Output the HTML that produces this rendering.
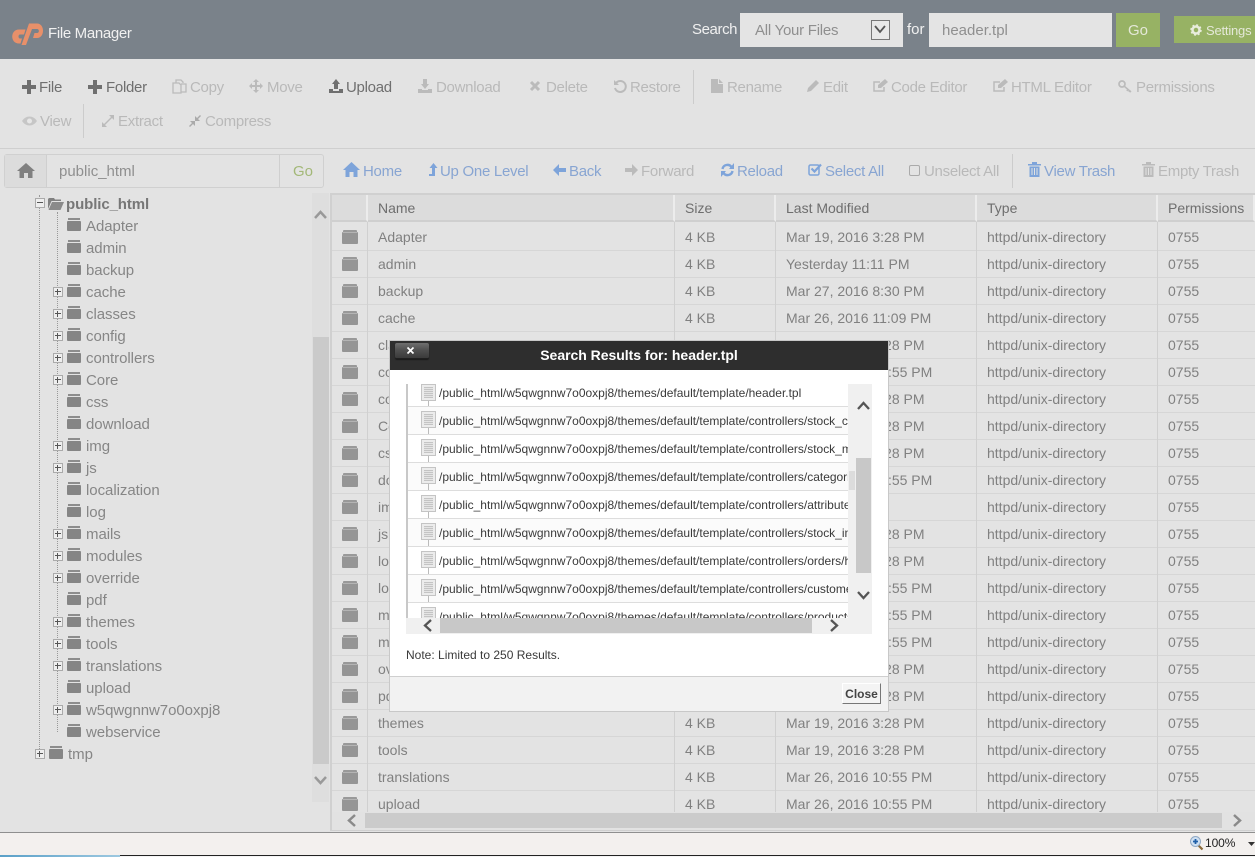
<!DOCTYPE html>
<html><head><meta charset="utf-8"><title>File Manager</title>
<style>
html,body{margin:0;padding:0}
body{width:1255px;height:857px;overflow:hidden;position:relative;background:#e3e3e3;font-family:"Liberation Sans",Arial,sans-serif;color:#777}
.a{position:absolute;white-space:nowrap}
.t{position:absolute;white-space:nowrap;font-size:15px;line-height:18px;letter-spacing:-.28px;margin-top:1px}
.d{color:#b9b9b9}.k{color:#6f6f6f}.b{color:#88a5d2}
svg{position:absolute;overflow:visible}
.tr{position:absolute;left:86px;font-size:15px;line-height:18px;color:#868686;white-space:nowrap;margin-top:1px;letter-spacing:-.05px}
.fi{position:absolute;left:67px;width:14px;height:10px;background:#858585;border-radius:1px}
.fi:before{content:"";position:absolute;left:1px;top:-3px;width:12px;height:2px;background:#8d8d8d}
.ex{position:absolute;left:53px;width:8px;height:8px;border:1px solid #aaa;background:#eee}
.ex:before{content:"";position:absolute;left:1px;top:3px;width:6px;height:1px;background:#555}
.ex:after{content:"";position:absolute;left:3px;top:1px;width:1px;height:6px;background:#555}
.row{position:absolute;left:332px;width:923px;height:26px;border-bottom:1px solid #d6d6d6;font-size:14px;line-height:26px;color:#808080;background:#e3e3e3}
.row span{position:absolute;top:0;white-space:nowrap}
.row .n{left:46px}.row .s{left:353px}.row .m{left:454px}.row .y{left:655px}.row .p{left:836px}
.row i{position:absolute;left:10px;top:8px;width:16px;height:12px;background:#959595;border-radius:1px}
.row i:before{content:"";position:absolute;left:1px;top:-2px;width:14px;height:2px;background:#999;box-shadow:0 1px 0 #b4b4b4;border-radius:1px 1px 0 0}
.th{position:absolute;top:195px;height:27px;line-height:26px;font-size:14px;color:#6e6e6e;background:#dcdcdc;border-right:2px solid #ececec;box-sizing:border-box;padding-left:10px;border-bottom:2px solid #cfcfcf}
.res{position:absolute;left:2px;width:442px;height:27px;border-bottom:1px solid #ddd;background:#fff;font-size:12px;line-height:17px;color:#3a3a3a;overflow:hidden;white-space:nowrap;letter-spacing:-.01px}
.res:nth-child(odd){background:#fbfbfb}
.res span{position:absolute;left:31px;top:0}
.fd{position:absolute;left:13px;top:-1px;width:13px;height:15px;background:#ececec;border:1px solid #c4c4c4}
.fd:before{content:"";position:absolute;left:2px;top:2px;width:9px;height:11px;background:repeating-linear-gradient(#c4c4c4 0 1px,#e4e4e4 1px 2px)}
.fd:after{content:"";position:absolute;left:6px;top:16px;width:1px;height:12px;background:#bbb}
.dv{position:absolute;border-left:1px dotted #999}
</style></head><body>

<div class="a" style="left:0;top:0;width:1255px;height:59px;background:#7a828a"></div>
<svg style="left:12px;top:23px" width="33" height="23" viewBox="0 0 33 23"><path d="M17 .5H25C33 .5 33 15 25 15H21L22.500 10H25C27.500 10 27.500 6 25 6H20L14 22H9.500z" fill="#e8906a"/><path d="M13.500 6.500L12 11.500H8C6 11.500 6 15.500 8 15.500H10L8.500 20.500H7C-2 20.500-2 6.500 7 6.500z" fill="#e8906a"/></svg>
<div class="a" style="left:48px;top:25px;font-size:15px;line-height:18px;color:#f0f0f0;letter-spacing:-.33px">File Manager</div>
<div class="a" style="left:692px;top:21px;font-size:15px;line-height:18px;color:#f0f0f0;letter-spacing:-.4px">Search</div>
<div class="a" style="left:740px;top:13px;width:163px;height:34px;background:#e4e4e4"></div>
<div class="a" style="left:755px;top:22px;font-size:15px;line-height:18px;color:#8f8f8f;letter-spacing:-.25px">All Your Files</div>
<div class="a" style="left:871px;top:20px;width:17px;height:18px;background:#e8e8e8;border:1px solid #777"></div>
<svg style="left:874px;top:25px" width="12" height="9"><path d="M1 1 L6 7 L11 1" fill="none" stroke="#555" stroke-width="1.800"/></svg>
<div class="a" style="left:907px;top:21px;font-size:15px;line-height:18px;color:#f0f0f0">for</div>
<div class="a" style="left:929px;top:13px;width:183px;height:34px;background:#e4e4e4"></div>
<div class="a" style="left:942px;top:22px;font-size:15px;line-height:18px;color:#8f8f8f">header.tpl</div>
<div class="a" style="left:1116px;top:14px;width:44px;height:33px;background:#97b264;color:#e4e8d8;font-size:15px;line-height:33px;text-align:center;box-shadow:0 -1px 0 #97b264">Go</div>
<div class="a" style="left:1174px;top:16px;width:81px;height:27px;background:#97b264;color:#e4e8d8;font-size:13px;line-height:30px;overflow:hidden;letter-spacing:-.2px"><span style="position:absolute;left:32px;top:0">Settings</span></div>
<svg style="left:1190px;top:24px" width="12" height="12" viewBox="0 0 12 12"><circle cx="6" cy="6" r="3.500" fill="none" stroke="#e8ecdc" stroke-width="2.500"/><circle cx="6" cy="6" r="5" fill="none" stroke="#e8ecdc" stroke-width="1.500" stroke-dasharray="2 1.930"/></svg>

<!-- toolbar icons -->
<svg style="left:22px;top:80px" width="14" height="14"><path d="M5 0h4v5h5v4H9v5H5V9H0V5h5z" fill="#6f6f6f"/></svg>
<div class="t k" style="left:39px;top:78px">File</div>
<svg style="left:88px;top:80px" width="14" height="14"><path d="M5 0h4v5h5v4H9v5H5V9H0V5h5z" fill="#6f6f6f"/></svg>
<div class="t k" style="left:106px;top:78px">Folder</div>
<svg style="left:172px;top:79px" width="16" height="15"><path d="M4 4V1h5l2 2v1M1 4h6l2 2v8H1zM9 5h5v8H9" fill="none" stroke="#bbb" stroke-width="1.300"/></svg>
<div class="t d" style="left:190px;top:78px">Copy</div>
<svg style="left:249px;top:79px" width="14" height="14"><path d="M7 0l3 3H8v3h3V4l3 3-3 3V8H8v3h2l-3 3-3-3h2V8H3v2L0 7l3-3v2h3V3H4z" fill="#bbb"/></svg>
<div class="t d" style="left:267px;top:78px">Move</div>
<svg style="left:329px;top:79px" width="14" height="14"><path d="M7 0l4 5H9v5H5V5H3zM0 10h4v2h6v-2h4v4H0z" fill="#6f6f6f"/></svg>
<div class="t k" style="left:346px;top:78px">Upload</div>
<svg style="left:418px;top:79px" width="14" height="14"><path d="M5 0h4v5h2l-4 5-4-5h2zM0 10h4v1h6v-1h4v4H0z" fill="#bbb"/></svg>
<div class="t d" style="left:436px;top:78px">Download</div>
<svg style="left:529px;top:80px" width="12" height="12"><path d="M2 2L10 10M10 2L2 10" stroke="#bbb" stroke-width="3"/></svg>
<div class="t d" style="left:546px;top:78px">Delete</div>
<svg style="left:613px;top:79px" width="14" height="14"><path d="M3 4A5.500 5.500 0 1 1 2 9" fill="none" stroke="#bbb" stroke-width="2"/><path d="M1 1V6H6z" fill="#bbb"/></svg>
<div class="t d" style="left:630px;top:78px">Restore</div>
<div class="a" style="left:693px;top:70px;width:1px;height:34px;background:#ccc"></div>
<svg style="left:711px;top:79px" width="12" height="14"><path d="M0 0H7V5H12V14H0zM8 0l4 4H8z" fill="#bbb"/></svg>
<div class="t d" style="left:727px;top:78px">Rename</div>
<svg style="left:807px;top:79px" width="13" height="14"><path d="M9 1l3 3-8 8-4 1 1-4z" fill="#bbb"/></svg>
<div class="t d" style="left:823px;top:78px">Edit</div>
<svg style="left:873px;top:79px" width="15" height="14"><path d="M11 8v4H1V3h6" fill="none" stroke="#bbb" stroke-width="1.500"/><path d="M12 0l3 3-7 6H5V6z" fill="#bbb"/></svg>
<div class="t d" style="left:891px;top:78px">Code Editor</div>
<svg style="left:993px;top:79px" width="15" height="14"><path d="M11 8v4H1V3h6" fill="none" stroke="#bbb" stroke-width="1.500"/><path d="M12 0l3 3-7 6H5V6z" fill="#bbb"/></svg>
<div class="t d" style="left:1011px;top:78px">HTML Editor</div>
<svg style="left:1118px;top:80px" width="14" height="13"><circle cx="4" cy="4" r="3" fill="none" stroke="#bbb" stroke-width="1.700"/><path d="M6 6l7 6M10 9l-1 2M12 10l-1 2" stroke="#bbb" stroke-width="1.500"/></svg>
<div class="t d" style="left:1136px;top:78px">Permissions</div>
<svg style="left:22px;top:116px" width="15" height="10"><path d="M0 5C4-1 11-1 15 5C11 11 4 11 0 5z" fill="#c6c6c6"/><circle cx="7.500" cy="5" r="2.500" fill="#e6e6e6"/></svg>
<div class="t d" style="left:40px;top:112px">View</div>
<div class="a" style="left:83px;top:104px;width:1px;height:34px;background:#ccc"></div>
<svg style="left:102px;top:115px" width="12" height="12"><path d="M7 0h5v5l-2-2-7 7 2 2H0V7l2 2 7-7z" fill="#bbb"/></svg>
<div class="t d" style="left:118px;top:112px">Extract</div>
<svg style="left:189px;top:115px" width="12" height="12"><path d="M11 0l1 1-3 3 2 2H6V1l2 2zM0 11l3-3-2-2h5v5l-2-2-3 3z" fill="#aaa"/></svg>
<div class="t d" style="left:205px;top:112px">Compress</div>
<div class="a" style="left:0;top:148px;width:1255px;height:1px;background:#cfcfcf"></div>

<!-- path bar -->
<div class="a" style="left:4px;top:154px;width:318px;height:32px;border:1px solid #d0d0d0;border-radius:3px"></div>
<div class="a" style="left:5px;top:155px;width:41px;height:32px;background:#dcdcdc;border-right:1px solid #cfcfcf"></div>
<svg style="left:17px;top:163px" width="18" height="15"><path d="M9 0L18 8H15.500V15H11V10H7V15H2.500V8H0z" fill="#808080"/></svg>
<div class="a" style="left:59px;top:163px;font-size:15px;line-height:18px;color:#8f8f8f">public_html</div>
<div class="a" style="left:279px;top:155px;width:1px;height:32px;background:#cfcfcf"></div>
<div class="a" style="left:293px;top:163px;font-size:15px;line-height:18px;color:#a3b878">Go</div>

<svg style="left:343px;top:162px" width="17" height="15"><path d="M8.500 0L17 8H14.500V15H10.500V10H6.500V15H2.500V8H0z" fill="#7ea4da"/></svg>
<div class="t b" style="left:363px;top:162px">Home</div>
<svg style="left:429px;top:163px" width="9" height="13"><path d="M4.500 0L8.500 5H6V13H0V11H3V5H.5z" fill="#7ea4da"/></svg>
<div class="t b" style="left:440px;top:162px">Up One Level</div>
<svg style="left:553px;top:164px" width="13" height="12"><path d="M6 0L0 6l6 6V8h7V4H6z" fill="#7ea4da"/></svg>
<div class="t b" style="left:569px;top:162px">Back</div>
<svg style="left:625px;top:164px" width="13" height="12"><path d="M7 0l6 6-6 6V8H0V4h7z" fill="#bbb"/></svg>
<div class="t d" style="left:641px;top:162px">Forward</div>
<svg style="left:721px;top:163px" width="13" height="14"><path d="M1.500 6A5 5 0 0 1 10.500 4M11.500 8A5 5 0 0 1 2.500 10" fill="none" stroke="#7ea4da" stroke-width="2.400"/><path d="M13 0V6H8zM0 14V8H5z" fill="#7ea4da"/></svg>
<div class="t b" style="left:737px;top:162px">Reload</div>
<svg style="left:808px;top:163px" width="14" height="13"><rect x="1" y="2" width="10" height="10" rx="1.500" fill="none" stroke="#7ea4da" stroke-width="1.500"/><path d="M3.500 5.500L6.500 8.500L13 1.500" fill="none" stroke="#7ea4da" stroke-width="2.200"/></svg>
<div class="t b" style="left:825px;top:162px">Select All</div>
<div class="a" style="left:909px;top:165px;width:9px;height:9px;border:1px solid #aaa;border-radius:2px"></div>
<div class="t d" style="left:924px;top:162px">Unselect All</div>
<div class="a" style="left:1012px;top:154px;width:1px;height:34px;background:#ccc"></div>
<svg style="left:1028px;top:161px" width="13" height="16"><path d="M0 3H13V4.500H0zM4 1H9V3H4zM1.500 5.500H11.500V16H1.500z" fill="#7ea4da"/><path d="M4 7V14M6.500 7V14M9 7V14" stroke="#e3e3e3" stroke-width="1"/></svg>
<div class="t b" style="left:1044px;top:162px">View Trash</div>
<svg style="left:1142px;top:161px" width="13" height="16"><path d="M0 3H13V4.500H0zM4 1H9V3H4zM1.500 5.500H11.500V16H1.500z" fill="#bbb"/><path d="M4 7V14M6.500 7V14M9 7V14" stroke="#e3e3e3" stroke-width="1"/></svg>
<div class="t d" style="left:1158px;top:162px">Empty Trash</div>

<!-- tree -->
<div class="dv" style="left:39px;top:195px;height:558px"></div>
<div class="dv" style="left:57px;top:212px;height:520px"></div>
<div class="ex" style="left:35px;top:198px"></div><div class="a" style="left:36px;top:199px;width:8px;height:8px;background:#eee"></div><div class="a" style="left:37px;top:202px;width:6px;height:1px;background:#555"></div>
<svg style="left:48px;top:197px" width="16" height="13"><path d="M1 1H6L7 2.500H13V4H3.500L0 12V2z" fill="#808080"/><path d="M4 5H16L12.500 13H.5z" fill="#8a8a8a"/></svg>
<div class="a" style="left:66px;top:196px;font-size:15px;line-height:18px;font-weight:bold;color:#777;letter-spacing:-.1px">public_html</div>

<div class="fi" style="top:221px"></div><div class="tr" style="top:217px">Adapter</div>
<div class="fi" style="top:243px"></div><div class="tr" style="top:239px">admin</div>
<div class="fi" style="top:265px"></div><div class="tr" style="top:261px">backup</div>
<div class="ex" style="top:287px"></div><div class="fi" style="top:287px"></div><div class="tr" style="top:283px">cache</div>
<div class="ex" style="top:309px"></div><div class="fi" style="top:309px"></div><div class="tr" style="top:305px">classes</div>
<div class="ex" style="top:331px"></div><div class="fi" style="top:331px"></div><div class="tr" style="top:327px">config</div>
<div class="ex" style="top:353px"></div><div class="fi" style="top:353px"></div><div class="tr" style="top:349px">controllers</div>
<div class="ex" style="top:375px"></div><div class="fi" style="top:375px"></div><div class="tr" style="top:371px">Core</div>
<div class="fi" style="top:397px"></div><div class="tr" style="top:393px">css</div>
<div class="fi" style="top:419px"></div><div class="tr" style="top:415px">download</div>
<div class="ex" style="top:441px"></div><div class="fi" style="top:441px"></div><div class="tr" style="top:437px">img</div>
<div class="ex" style="top:463px"></div><div class="fi" style="top:463px"></div><div class="tr" style="top:459px">js</div>
<div class="fi" style="top:485px"></div><div class="tr" style="top:481px">localization</div>
<div class="fi" style="top:507px"></div><div class="tr" style="top:503px">log</div>
<div class="ex" style="top:529px"></div><div class="fi" style="top:529px"></div><div class="tr" style="top:525px">mails</div>
<div class="ex" style="top:551px"></div><div class="fi" style="top:551px"></div><div class="tr" style="top:547px">modules</div>
<div class="ex" style="top:573px"></div><div class="fi" style="top:573px"></div><div class="tr" style="top:569px">override</div>
<div class="fi" style="top:595px"></div><div class="tr" style="top:591px">pdf</div>
<div class="ex" style="top:617px"></div><div class="fi" style="top:617px"></div><div class="tr" style="top:613px">themes</div>
<div class="ex" style="top:639px"></div><div class="fi" style="top:639px"></div><div class="tr" style="top:635px">tools</div>
<div class="ex" style="top:661px"></div><div class="fi" style="top:661px"></div><div class="tr" style="top:657px">translations</div>
<div class="fi" style="top:683px"></div><div class="tr" style="top:679px">upload</div>
<div class="ex" style="top:705px"></div><div class="fi" style="top:705px"></div><div class="tr" style="top:701px">w5qwgnnw7o0oxpj8</div>
<div class="fi" style="top:727px"></div><div class="tr" style="top:723px">webservice</div>
<div class="ex" style="left:35px;top:749px"></div><div class="fi" style="left:49px;top:749px"></div><div class="tr" style="left:68px;top:745px">tmp</div>

<!-- tree scrollbar -->
<div class="a" style="left:312px;top:193px;width:17px;height:609px;background:#dedede"></div>
<div class="a" style="left:313px;top:337px;width:16px;height:427px;background:#cacaca"></div>
<svg style="left:314px;top:210px" width="13" height="9"><path d="M1 8L6.500 2L12 8" fill="none" stroke="#999" stroke-width="2.500"/></svg>
<svg style="left:314px;top:776px" width="13" height="9"><path d="M1 1L6.500 7L12 1" fill="none" stroke="#999" stroke-width="2.500"/></svg>

<!-- table -->
<div class="a" style="left:330px;top:193px;width:2px;height:638px;background:#d0d0d0"></div>
<div class="a" style="left:330px;top:193px;width:925px;height:2px;background:#d0d0d0"></div>
<div class="th" style="left:332px;width:36px"></div>
<div class="th" style="left:368px;width:307px">Name</div>
<div class="th" style="left:675px;width:101px">Size</div>
<div class="th" style="left:776px;width:201px">Last Modified</div>
<div class="th" style="left:977px;width:181px">Type</div>
<div class="th" style="left:1158px;width:97px">Permissions</div>

<div id="rows">
<div class="row" style="top:224px"><i></i><span class="n">Adapter</span><span class="s">4 KB</span><span class="m">Mar 19, 2016 3:28 PM</span><span class="y">httpd/unix-directory</span><span class="p">0755</span></div>
<div class="row" style="top:251px"><i></i><span class="n">admin</span><span class="s">4 KB</span><span class="m">Yesterday 11:11 PM</span><span class="y">httpd/unix-directory</span><span class="p">0755</span></div>
<div class="row" style="top:278px"><i></i><span class="n">backup</span><span class="s">4 KB</span><span class="m">Mar 27, 2016 8:30 PM</span><span class="y">httpd/unix-directory</span><span class="p">0755</span></div>
<div class="row" style="top:305px"><i></i><span class="n">cache</span><span class="s">4 KB</span><span class="m">Mar 26, 2016 11:09 PM</span><span class="y">httpd/unix-directory</span><span class="p">0755</span></div>
<div class="row" style="top:332px"><i></i><span class="n">classes</span><span class="s">4 KB</span><span class="m">Mar 19, 2016 3:28 PM</span><span class="y">httpd/unix-directory</span><span class="p">0755</span></div>
<div class="row" style="top:359px"><i></i><span class="n">config</span><span class="s">4 KB</span><span class="m">Mar 26, 2016 10:55 PM</span><span class="y">httpd/unix-directory</span><span class="p">0755</span></div>
<div class="row" style="top:386px"><i></i><span class="n">controllers</span><span class="s">4 KB</span><span class="m">Mar 19, 2016 3:28 PM</span><span class="y">httpd/unix-directory</span><span class="p">0755</span></div>
<div class="row" style="top:413px"><i></i><span class="n">Core</span><span class="s">4 KB</span><span class="m">Mar 19, 2016 3:28 PM</span><span class="y">httpd/unix-directory</span><span class="p">0755</span></div>
<div class="row" style="top:440px"><i></i><span class="n">css</span><span class="s">4 KB</span><span class="m">Mar 19, 2016 3:28 PM</span><span class="y">httpd/unix-directory</span><span class="p">0755</span></div>
<div class="row" style="top:467px"><i></i><span class="n">download</span><span class="s">4 KB</span><span class="m">Mar 26, 2016 10:55 PM</span><span class="y">httpd/unix-directory</span><span class="p">0755</span></div>
<div class="row" style="top:494px"><i></i><span class="n">img</span><span class="s">4 KB</span><span class="y">httpd/unix-directory</span><span class="p">0755</span></div>
<div class="row" style="top:521px"><i></i><span class="n">js</span><span class="s">4 KB</span><span class="m">Mar 19, 2016 3:28 PM</span><span class="y">httpd/unix-directory</span><span class="p">0755</span></div>
<div class="row" style="top:548px"><i></i><span class="n">localization</span><span class="s">4 KB</span><span class="m">Mar 19, 2016 3:28 PM</span><span class="y">httpd/unix-directory</span><span class="p">0755</span></div>
<div class="row" style="top:575px"><i></i><span class="n">log</span><span class="s">4 KB</span><span class="m">Mar 26, 2016 10:55 PM</span><span class="y">httpd/unix-directory</span><span class="p">0755</span></div>
<div class="row" style="top:602px"><i></i><span class="n">mails</span><span class="s">4 KB</span><span class="m">Mar 26, 2016 10:55 PM</span><span class="y">httpd/unix-directory</span><span class="p">0755</span></div>
<div class="row" style="top:629px"><i></i><span class="n">modules</span><span class="s">4 KB</span><span class="m">Mar 26, 2016 10:55 PM</span><span class="y">httpd/unix-directory</span><span class="p">0755</span></div>
<div class="row" style="top:656px"><i></i><span class="n">override</span><span class="s">4 KB</span><span class="m">Mar 19, 2016 3:28 PM</span><span class="y">httpd/unix-directory</span><span class="p">0755</span></div>
<div class="row" style="top:683px"><i></i><span class="n">pdf</span><span class="s">4 KB</span><span class="m">Mar 19, 2016 3:28 PM</span><span class="y">httpd/unix-directory</span><span class="p">0755</span></div>
<div class="row" style="top:710px"><i></i><span class="n">themes</span><span class="s">4 KB</span><span class="m">Mar 19, 2016 3:28 PM</span><span class="y">httpd/unix-directory</span><span class="p">0755</span></div>
<div class="row" style="top:737px"><i></i><span class="n">tools</span><span class="s">4 KB</span><span class="m">Mar 19, 2016 3:28 PM</span><span class="y">httpd/unix-directory</span><span class="p">0755</span></div>
<div class="row" style="top:764px"><i></i><span class="n">translations</span><span class="s">4 KB</span><span class="m">Mar 26, 2016 10:55 PM</span><span class="y">httpd/unix-directory</span><span class="p">0755</span></div>
<div class="row" style="top:791px;height:21px;overflow:hidden;border:0"><i></i><span class="n">upload</span><span class="s">4 KB</span><span class="m">Mar 26, 2016 10:55 PM</span><span class="y">httpd/unix-directory</span><span class="p">0755</span></div>
</div>
<div class="a" style="left:367px;top:222px;width:1px;height:590px;background:#d0d0d0"></div>
<div class="a" style="left:674px;top:222px;width:1px;height:590px;background:#d0d0d0"></div>
<div class="a" style="left:775px;top:222px;width:1px;height:590px;background:#d0d0d0"></div>
<div class="a" style="left:976px;top:222px;width:1px;height:590px;background:#d0d0d0"></div>
<div class="a" style="left:1157px;top:222px;width:1px;height:590px;background:#d0d0d0"></div>

<!-- table h scrollbar -->
<div class="a" style="left:332px;top:812px;width:923px;height:18px;background:#e2e2e2"></div>
<div class="a" style="left:365px;top:813px;width:857px;height:15px;background:#cbcbcb"></div>
<svg style="left:347px;top:814px" width="10" height="13"><path d="M8 1L2 6.500L8 12" fill="none" stroke="#8a8a8a" stroke-width="2.500"/></svg>
<svg style="left:1232px;top:814px" width="10" height="13"><path d="M2 1L8 6.500L2 12" fill="none" stroke="#8a8a8a" stroke-width="2.500"/></svg>
<div class="a" style="left:330px;top:830px;width:925px;height:1px;background:#cfcfcf"></div>

<!-- status bar -->
<div class="a" style="left:0;top:832px;width:1255px;height:1px;background:#8f8f8f"></div>
<div class="a" style="left:0;top:833px;width:1255px;height:22px;background:#f3f0ee"></div>
<div class="a" style="left:0;top:855px;width:120px;height:2px;background:linear-gradient(90deg,#5aa0c8,#9cc8e0)"></div>
<div class="a" style="left:120px;top:855px;width:1135px;height:1px;background:#222"></div>
<div class="a" style="left:120px;top:856px;width:1135px;height:1px;background:#f4f4f4"></div>
<svg style="left:1190px;top:836px" width="13" height="14"><path d="M8 9L12.500 13.500" stroke="#8a6a3a" stroke-width="2.200"/><circle cx="5.500" cy="5.500" r="5" fill="#cfe0f2" stroke="#8fa8c4"/><path d="M3 5.500H8M5.500 3V8" stroke="#1f5fa8" stroke-width="1.800"/></svg>
<div class="a" style="left:1205px;top:836px;font-size:12px;line-height:15px;color:#222;letter-spacing:-.1px">100%</div>
<svg style="left:1248px;top:842px" width="7" height="4"><path d="M0 0H7L3.500 4z" fill="#333"/></svg>

<!-- modal -->
<div class="a" style="left:389px;top:340px;width:500px;height:372px;background:#c8c8c8"></div>
<div class="a" style="left:390px;top:341px;width:498px;height:370px;background:#fff"></div>
<div class="a" style="left:390px;top:341px;width:498px;height:29px;background:#2e2e2e"></div>
<div class="a" style="left:395px;top:343px;width:34px;height:15px;background:linear-gradient(#6e6e6e,#4e4e4e 50%,#3a3a3a);border-bottom:1px solid #1f1f1f;border-radius:2px;box-shadow:0 1px 1px #1a1a1a"></div>
<svg style="left:407px;top:347px" width="7" height="7"><path d="M.5 .5L6.500 6.500M6.500 .5L.5 6.500" stroke="#fff" stroke-width="1.700"/></svg>
<div class="a" style="left:390px;top:347px;width:498px;text-align:center;font-size:14px;line-height:16px;font-weight:bold;color:#fff;letter-spacing:-.03px">Search Results for: header.tpl</div>

<div class="a" style="left:406px;top:384px;width:466px;height:250px;background:#f0f0f0"></div>
<div class="a" style="left:406px;top:384px;width:442px;height:234px;background:#fff;overflow:hidden;border-left:0">
<div style="position:absolute;left:0;top:0;width:2px;height:234px;background:#c8c8c8"></div>
<div class="res" style="top:0;height:22px;line-height:18px"><div class="fd" style="top:0"></div><span>/public_html/w5qwgnnw7o0oxpj8/themes/default/template/header.tpl</span></div>
<div class="res" style="top:23px"><div class="fd" style="top:4px"></div><span style="top:6px">/public_html/w5qwgnnw7o0oxpj8/themes/default/template/controllers/stock_cover/helpers/header.tpl</span></div>
<div class="res" style="top:51px"><div class="fd" style="top:4px"></div><span style="top:6px">/public_html/w5qwgnnw7o0oxpj8/themes/default/template/controllers/stock_mvt/helpers/header.tpl</span></div>
<div class="res" style="top:79px"><div class="fd" style="top:4px"></div><span style="top:6px">/public_html/w5qwgnnw7o0oxpj8/themes/default/template/controllers/categories/helpers/header.tpl</span></div>
<div class="res" style="top:107px"><div class="fd" style="top:4px"></div><span style="top:6px">/public_html/w5qwgnnw7o0oxpj8/themes/default/template/controllers/attributes/helpers/header.tpl</span></div>
<div class="res" style="top:135px"><div class="fd" style="top:4px"></div><span style="top:6px">/public_html/w5qwgnnw7o0oxpj8/themes/default/template/controllers/stock_instant/helpers/header.tpl</span></div>
<div class="res" style="top:163px"><div class="fd" style="top:4px"></div><span style="top:6px">/public_html/w5qwgnnw7o0oxpj8/themes/default/template/controllers/orders/helpers/header.tpl</span></div>
<div class="res" style="top:191px"><div class="fd" style="top:4px"></div><span style="top:6px">/public_html/w5qwgnnw7o0oxpj8/themes/default/template/controllers/customers/helpers/header.tpl</span></div>
<div class="res" style="top:219px"><div class="fd" style="top:4px"></div><span style="top:6px">/public_html/w5qwgnnw7o0oxpj8/themes/default/template/controllers/products/helpers/header.tpl</span></div>
</div>
<div class="a" style="left:849px;top:471px;width:6px;height:19px;background:#dcdcdc"></div>
<div class="a" style="left:856px;top:458px;width:15px;height:115px;background:#c8c8c8"></div>
<svg style="left:857px;top:401px" width="13" height="9"><path d="M1 8L6.500 2L12 8" fill="none" stroke="#555" stroke-width="2.300"/></svg>
<svg style="left:857px;top:591px" width="13" height="9"><path d="M1 1L6.500 7L12 1" fill="none" stroke="#555" stroke-width="2.300"/></svg>
<div class="a" style="left:440px;top:618px;width:372px;height:15px;background:#c8c8c8"></div>
<svg style="left:423px;top:619px" width="10" height="13"><path d="M8 1L2 6.500L8 12" fill="none" stroke="#555" stroke-width="2.300"/></svg>
<svg style="left:829px;top:619px" width="10" height="13"><path d="M2 1L8 6.500L2 12" fill="none" stroke="#555" stroke-width="2.300"/></svg>
<div class="a" style="left:406px;top:648px;font-size:12px;line-height:15px;color:#3a3a3a">Note: Limited to 250 Results.</div>
<div class="a" style="left:390px;top:676px;width:498px;height:1px;background:#cfcfcf"></div>
<div class="a" style="left:390px;top:677px;width:498px;height:34px;background:#f2f2f2"></div>
<div class="a" style="left:842px;top:683px;width:37px;height:19px;background:#f4f4f4;border:1px solid;border-color:#fff #777 #777 #fff;text-align:center;font-size:12px;line-height:21px;font-weight:bold;color:#444">Close</div>
</body></html>
